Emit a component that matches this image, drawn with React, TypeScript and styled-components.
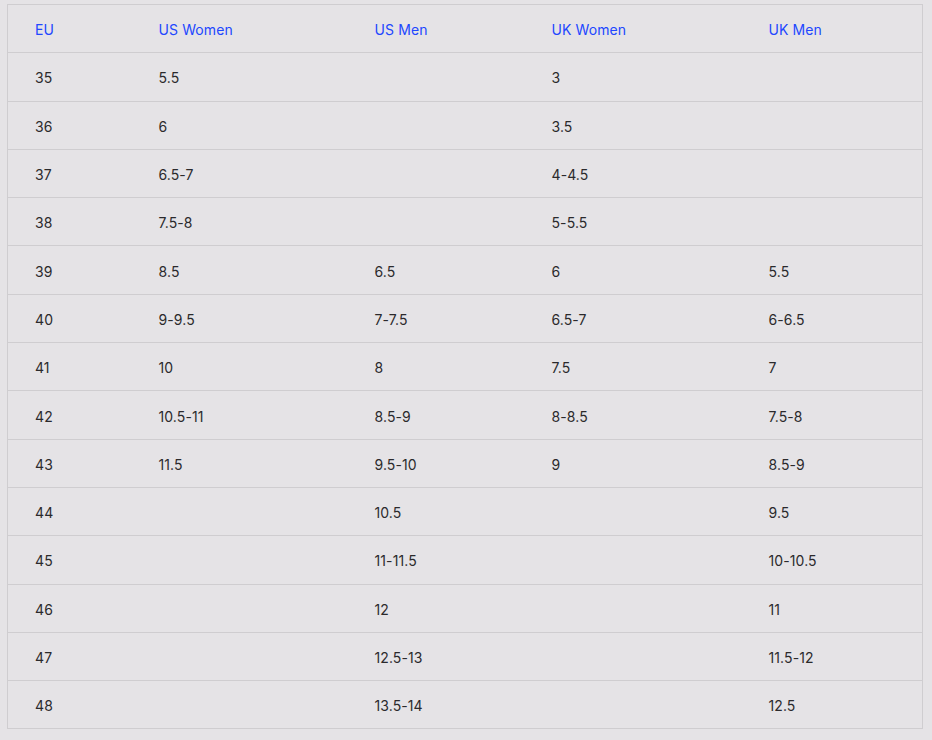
import styled, { createGlobalStyle } from "styled-components";

const GlobalStyle = createGlobalStyle`
  html, body {
    margin: 0;
    padding: 0;
    background: #e5e3e6;
  }
  body {
    font-family: "Inter", "Noto Sans", sans-serif;
  }
`;

const headers = ["EU", "US Women", "US Men", "UK Women", "UK Men"];
const widths = [124, 216, 177, 217, 181];

const rows: string[][] = [
  ["35", "5.5", "", "3", ""],
  ["36", "6", "", "3.5", ""],
  ["37", "6.5-7", "", "4-4.5", ""],
  ["38", "7.5-8", "", "5-5.5", ""],
  ["39", "8.5", "6.5", "6", "5.5"],
  ["40", "9-9.5", "7-7.5", "6.5-7", "6-6.5"],
  ["41", "10", "8", "7.5", "7"],
  ["42", "10.5-11", "8.5-9", "8-8.5", "7.5-8"],
  ["43", "11.5", "9.5-10", "9", "8.5-9"],
  ["44", "", "10.5", "", "9.5"],
  ["45", "", "11-11.5", "", "10-10.5"],
  ["46", "", "12", "", "11"],
  ["47", "", "12.5-13", "", "11.5-12"],
  ["48", "", "13.5-14", "", "12.5"],
];

export default function App() {
  return (
    <>
      <GlobalStyle />
      <Page>
        <SizeTable>
          <colgroup>
            {widths.map((w, i) => (
              <col key={i} style={{ width: w }} />
            ))}
          </colgroup>
          <thead>
            <Row>
              {headers.map((h) => (
                <HeadCell key={h}>{h}</HeadCell>
              ))}
            </Row>
          </thead>
          <tbody>
            {rows.map((r) => (
              <Row key={r[0]}>
                {r.map((v, i) => (
                  <Cell key={i}>{v}</Cell>
                ))}
              </Row>
            ))}
          </tbody>
        </SizeTable>
      </Page>
    </>
  );
}

const Page = styled.div`
  padding: 4px 10px 0 7px;
`;

const SizeTable = styled.table`
  width: 916px;
  table-layout: fixed;
  border-collapse: collapse;
  border: 1px solid #cfcdd0;
  background: #e5e3e6;
`;

const Row = styled.tr`
  height: 48.3px;
  border-bottom: 1px solid #cfcdd0;
`;

const HeadCell = styled.th`
  padding: 2px 0 0 27px;
  text-align: left;
  font-weight: 400;
  font-size: 14px;
  color: #2147ff;
  letter-spacing: 0.1px;
`;

const Cell = styled.td`
  padding: 2px 0 0 27px;
  font-size: 14px;
  color: #2b2a2c;
  letter-spacing: 0.1px;
`;
